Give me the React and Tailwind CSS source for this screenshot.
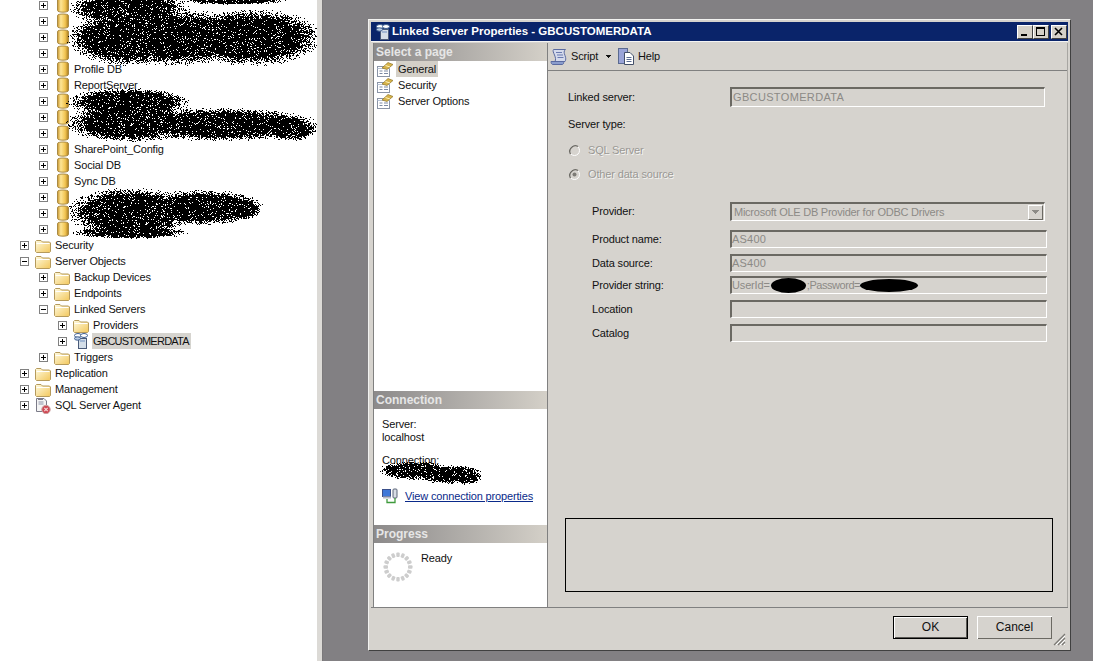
import { useId } from 'react'

const font = "font-['Liberation_Sans',Arial,sans-serif] text-[11px] leading-[13px] tracking-[-0.15px]"

// scribbled-out areas, speckled pixel by pixel
const speckle = (blobs, w, h) => {
  let seed = 12345
  const rand = () => {
    seed = (seed * 1103515245 + 12345) & 0x7fffffff
    return seed / 0x7fffffff
  }
  let d = ''
  for (let y = 0; y < h; y++) {
    for (let x = 0; x < w; x++) {
      let v = 9
      for (const [cx, cy, rx, ry] of blobs) {
        v = Math.min(v, Math.hypot((x - cx) / rx, (y - cy) / ry))
      }
      const p = v < 0.72 ? 0.9 : v < 1.06 ? (0.9 * (1.06 - v)) / 0.34 : 0
      if (rand() < p) d += `M${x} ${y}h1v1h-1z`
    }
  }
  return d
}

const treeBlobs = [
  [235, 0, 50, 4],
  [128, 8, 58, 16],
  [125, 38, 56, 26],
  [170, 37, 90, 27],
  [252, 37, 68, 27],
  [128, 102, 60, 14],
  [130, 122, 62, 19],
  [220, 124, 95, 16],
  [290, 128, 26, 12],
  [130, 212, 60, 24],
  [200, 207, 60, 17],
  [238, 208, 24, 11],
  [130, 232, 56, 6],
]

const connectionBlobs = [
  [35, 9, 34, 9],
  [70, 13, 34, 9],
  [88, 15, 14, 8],
]

const Scribble = ({ blobs, w, h, className }) => (
  <svg width={w} height={h} className={className} shapeRendering="crispEdges">
    <path d={speckle(blobs, w, h)} fill="#000" />
  </svg>
)

const Expander = ({ open }) => (
  <span className="flex h-[9px] w-[9px] shrink-0 items-center justify-center border border-[#808080] bg-white">
    <svg width="7" height="7" shapeRendering="crispEdges">
      <path d="M1 3h5v1H1z" fill="#000" />
      {!open && <path d="M3 1h1v5H3z" fill="#000" />}
    </svg>
  </span>
)

const DbIcon = () => {
  const id = useId()
  return (
    <svg width="12" height="16" className="ml-[3px]">
      <defs>
        <linearGradient id={id}>
          <stop offset="0" stopColor="#c9952c" />
          <stop offset="0.3" stopColor="#fde596" />
          <stop offset="0.7" stopColor="#f2c552" />
          <stop offset="1" stopColor="#a87a1e" />
        </linearGradient>
      </defs>
      <path d="M0.5 2.5C0.5 0.5 11.5 0.5 11.5 2.5V13.5C11.5 15.7 0.5 15.7 0.5 13.5Z" fill={`url(#${id})`} stroke="#a98a44" />
    </svg>
  )
}

const FolderIcon = () => {
  const id = useId()
  return (
    <svg width="16" height="14" className="mt-[2px]">
      <defs>
        <linearGradient id={id} x2="1" y2="1">
          <stop offset="0" stopColor="#fffbe0" />
          <stop offset="1" stopColor="#f2c75c" />
        </linearGradient>
      </defs>
      <path d="M0.5 12.5V2.5L1.5 1.5H6L7.5 3H14.5L15.5 4V12.5L14.5 13.5H1.5Z" fill={`url(#${id})`} stroke="#b59a5c" />
      <path d="M1.5 4.5H14.5" stroke="#fff" />
    </svg>
  )
}

const LinkedIcon = () => (
  <svg width="14" height="16" viewBox="0 0 14 16" className="ml-[1px]">
    <rect x="4.5" y="5.5" width="8" height="10" fill="#d4dee8" stroke="#4a5a78" />
    <path d="M6 8h5" stroke="#6f8fc0" />
    <ellipse cx="4" cy="2.5" rx="3.5" ry="2" fill="#fff" stroke="#3f5f90" />
    <ellipse cx="10" cy="2.5" rx="3.5" ry="2" fill="#fff" stroke="#3f5f90" />
    <ellipse cx="3.5" cy="5.5" rx="3" ry="1.7" fill="#b9cbe4" stroke="#3f5f90" />
  </svg>
)

const AgentIcon = () => (
  <svg width="16" height="17" viewBox="0 0 16 17">
    <path d="M1.5 1.5H9L11.5 4V14.5H1.5Z" fill="#f4f4f4" stroke="#7b7b88" />
    <path d="M3.5 5h5M3.5 7h5" stroke="#8c93a8" />
    <rect x="3" y="1" width="5" height="2" fill="#7b7b88" />
    <circle cx="11" cy="12.5" r="4.2" fill="#cf4a55" stroke="#c9a0a0" />
    <path d="M9.3 10.8l3.4 3.4M12.7 10.8l-3.4 3.4" stroke="#f6dcdc" strokeWidth="1.1" />
  </svg>
)

const TreeRow = ({ level, icon, label, open, selected }) => (
  <div
    className={`flex h-4 items-center ${
      level === 1 ? 'pl-5' : level === 2 ? 'pl-[39px]' : 'pl-[58px]'
    }`}
  >
    <Expander open={open} />
    <span className="ml-[6px] flex h-4 w-4 shrink-0 items-start">
      {icon === 'db' && <DbIcon />}
      {icon === 'folder' && <FolderIcon />}
      {icon === 'linked' && <LinkedIcon />}
      {icon === 'agent' && <AgentIcon />}
    </span>
    <span
      className={`ml-[3px] whitespace-nowrap pl-[1px] pr-[2px] leading-4 text-[#111] ${
        selected ? 'bg-[#d6d4cf] tracking-[-0.75px]' : ''
      }`}
    >
      {label}
    </span>
  </div>
)

const dbRows = ['', '', '', '', 'Profile DB', 'ReportServer', '', '', '', 'SharePoint_Config', 'Social DB', 'Sync DB', '', '', '']

const Tree = () => (
  <div className={`relative w-[317px] shrink-0 overflow-hidden bg-white ${font}`}>
    <div className="-mt-[3px]">
      {dbRows.map((label, i) => (
        <TreeRow key={i} level={2} icon="db" label={label} />
      ))}
      <TreeRow level={1} icon="folder" label="Security" />
      <TreeRow level={1} icon="folder" label="Server Objects" open />
      <TreeRow level={2} icon="folder" label="Backup Devices" />
      <TreeRow level={2} icon="folder" label="Endpoints" />
      <TreeRow level={2} icon="folder" label="Linked Servers" open />
      <TreeRow level={3} icon="folder" label="Providers" />
      <TreeRow level={3} icon="linked" label="GBCUSTOMERDATA" selected />
      <TreeRow level={2} icon="folder" label="Triggers" />
      <TreeRow level={1} icon="folder" label="Replication" />
      <TreeRow level={1} icon="folder" label="Management" />
      <TreeRow level={1} icon="agent" label="SQL Server Agent" />
    </div>
    <Scribble blobs={treeBlobs} w={317} h={240} className="absolute left-0 top-0" />
  </div>
)

const PaneHeader = ({ children }) => (
  <div className="flex h-[18px] shrink-0 items-center bg-gradient-to-r from-[#8c8a8a] to-[#d4d0c8] pl-[2px] text-[12px] font-bold tracking-normal text-[#e6e6e6]">
    {children}
  </div>
)

const PageIcon = () => (
  <svg width="17" height="16" viewBox="0 0 17 16">
    <rect x="0.5" y="5.5" width="12" height="10" fill="#fff" stroke="#8a94a6" />
    <path d="M0.5 7.5h12" stroke="#b7c3d6" />
    <path d="M2.5 10h3M2.5 12.5h3M7 10h4M7 12.5h4" stroke="#7c8aa3" />
    <path d="M5 7L11 1.5L16 3.5L10 8.5Z" fill="#d8b44a" stroke="#8e7428" strokeWidth="0.7" />
    <path d="M8.5 4.5L13 6" stroke="#fff3b8" />
  </svg>
)

const PageRow = ({ label, selected }) => (
  <div className="flex h-4 items-center pl-[3px]">
    <PageIcon />
    <span className={`ml-[2px] px-[2px] leading-4 text-[#111] ${selected ? 'bg-[#d4d0c8]' : ''}`}>{label}</span>
  </div>
)

const NetIcon = () => (
  <svg width="17" height="16" viewBox="0 0 17 16">
    <rect x="0.5" y="1.5" width="8" height="7" fill="#3f78d8" stroke="#3a4f8a" />
    <rect x="1" y="8.5" width="8" height="2" fill="#b8bcc8" />
    <rect x="11" y="1" width="4" height="9" rx="1" fill="#d8dce4" stroke="#5a6478" />
    <path d="M5 11v3.5h8V10" fill="none" stroke="#3f9a3c" strokeWidth="1.3" />
  </svg>
)

const Spinner = () => (
  <svg width="30" height="30" viewBox="-15 -15 30 30">
    {Array.from({ length: 16 }).map((_, i) => (
      <rect key={i} x="-1.7" y="-14.5" width="3.4" height="4.5" rx="1" fill="#cdcdcd" transform={`rotate(${i * 22.5})`} />
    ))}
  </svg>
)

const LeftPane = () => (
  <div className="ml-[2px] flex w-[175px] shrink-0 flex-col border-l border-r border-[#808080] bg-white">
    <PaneHeader>Select a page</PaneHeader>
    <div className="flex-1">
      <PageRow label="General" selected />
      <PageRow label="Security" />
      <PageRow label="Server Options" />
    </div>
    <PaneHeader>Connection</PaneHeader>
    <div className="relative h-[116px] pl-2 pt-[9px] text-[#111]">
      <div>Server:</div>
      <div>localhost</div>
      <div className="mt-[10px]">Connection:</div>
      <Scribble blobs={connectionBlobs} w={110} h={26} className="absolute left-[5px] top-[52px]" />
      <div className="mt-[21px] flex h-4 items-center">
        <NetIcon />
        <a className="ml-[6px] text-[#0a2a8a] underline">View connection properties</a>
      </div>
    </div>
    <PaneHeader>Progress</PaneHeader>
    <div className="flex h-[64px] pl-[9px] pt-[9px] text-[#111]">
      <Spinner />
      <span className="ml-2">Ready</span>
    </div>
  </div>
)

const ScriptIcon = () => (
  <svg width="18" height="18" viewBox="0 0 18 18">
    <path d="M3.5 1.5H15.5C13.5 3 14 5 15 7.5C16 10 16 12 15 13.5H5C6 11.5 5.5 9.5 4.5 7C3.5 4.5 2.5 3 3.5 1.5Z" fill="#d4daec" stroke="#5a6aa0" />
    <path d="M1 13.5H13.5C14 15 13.5 16 12.5 16.5H2.5C1.5 16 1 15 1 13.5Z" fill="#8a9ccc" stroke="#5a6aa0" />
    <path d="M6 4.5h6M7 7h6M7.5 9.5h6" stroke="#6a7ab0" />
  </svg>
)

const HelpIcon = () => (
  <svg width="17" height="17" viewBox="0 0 17 17">
    <rect x="0.5" y="0.5" width="9" height="15" fill="#9aa4d8" stroke="#5a6a90" />
    <path d="M6.5 4.5H12L15.5 8V16.5H6.5Z" fill="#fff" stroke="#44506a" />
    <path d="M8.5 9.5h5M8.5 11.5h5M8.5 13.5h5" stroke="#5a6a90" />
  </svg>
)

const Toolbar = () => (
  <div className="flex h-[28px] shrink-0 items-center border-b border-[#808080] pl-[2px] text-[#111]">
    <ScriptIcon />
    <span className="ml-[3px] w-[29px]">Script</span>
    <svg width="5" height="3" className="ml-[6px]" shapeRendering="crispEdges">
      <path d="M0 0h5v1h-1v1h-1v1h-1v-1h-1v-1h-1z" fill="#111" />
    </svg>
    <span className="ml-[7px] flex">
      <HelpIcon />
    </span>
    <span className="ml-[3px]">Help</span>
  </div>
)

const fieldBox = 'border-t-2 border-l-2 border-b border-r border-t-[#6b6963] border-l-[#6b6963] border-b-white border-r-white'

const Field = ({ children, className = 'h-[18px] w-[317px]' }) => (
  <div className={`flex items-center overflow-hidden whitespace-nowrap text-[#8c8a86] ${fieldBox} ${className}`}>
    {children}
  </div>
)

const FormRow = ({ label, mt, children }) => (
  <div className={`flex items-center pl-[44px] ${mt}`}>
    <span className="w-[138px] shrink-0 text-[#111]">{label}</span>
    {children}
  </div>
)

const Radio = ({ checked }) => (
  <svg width="13" height="13" viewBox="0 0 13 13">
    <circle cx="6.5" cy="6.5" r="5" fill="#d6d3ce" stroke="#fff" />
    <path d="M2.5 10A5.5 5.5 0 0 1 10 2.5" fill="none" stroke="#6b6963" strokeWidth="1.4" />
    {checked && <circle cx="6.5" cy="6.5" r="2" fill="#7d7b76" />}
  </svg>
)

const RadioRow = ({ label, checked, mt }) => (
  <div className={`flex h-4 items-center pl-[20px] ${mt}`}>
    <Radio checked={checked} />
    <span className="ml-[7px] text-[#9a9894] [text-shadow:1px_1px_0_#f4f4f2]">{label}</span>
  </div>
)

const RightPane = () => (
  <div className="flex min-w-0 flex-1 flex-col border-r border-[#a8a6a2]">
    <Toolbar />
    <div className="flex flex-1 flex-col">
      <div className="mt-4 flex items-center pl-5">
        <span className="w-[162px] shrink-0 text-[#111]">Linked server:</span>
        <Field className="h-5 w-[315px]">
          <span className="pl-px tracking-[0.35px]">GBCUSTOMERDATA</span>
        </Field>
      </div>
      <div className="mt-[9px] flex h-4 items-center pl-5 text-[#111]">Server type:</div>
      <RadioRow label="SQL Server" mt="mt-[10px]" />
      <RadioRow label="Other data source" checked mt="mt-2" />
      <FormRow label="Provider:" mt="mt-5">
        <Field className="h-[19px] w-[315px] justify-between">
          <span className="pl-[2px] tracking-[-0.25px]">Microsoft OLE DB Provider for ODBC Drivers</span>
          <span className="mr-px flex h-[15px] w-[15px] items-center justify-center border border-t-white border-l-white border-b-[#6b6963] border-r-[#6b6963]">
            <svg width="7" height="4" shapeRendering="crispEdges">
              <path d="M0 0h7v1h-1v1h-1v1h-1v1h-1v-1h-1v-1h-1v-1h-1z" fill="#8c8a86" />
            </svg>
          </span>
        </Field>
      </FormRow>
      <FormRow label="Product name:" mt="mt-[9px]">
        <Field>
          <span className="tracking-[0.2px]">AS400</span>
        </Field>
      </FormRow>
      <FormRow label="Data source:" mt="mt-[6px]">
        <Field>
          <span className="tracking-[0.2px]">AS400</span>
        </Field>
      </FormRow>
      <FormRow label="Provider string:" mt="mt-1">
        <Field>
          UserId=
          <span className="mx-px inline-block h-[15px] w-[35px] rounded-[50%] bg-black" />
          <span className="tracking-[-0.45px]">;Password=</span>
          <span className="inline-block h-[13px] w-[58px] rounded-[50%] bg-black" />
        </Field>
      </FormRow>
      <FormRow label="Location" mt="mt-[6px]">
        <Field />
      </FormRow>
      <FormRow label="Catalog" mt="mt-[6px]">
        <Field />
      </FormRow>
      <div className="mb-[15px] ml-[17px] mt-auto h-[74px] w-[488px] border border-black" />
    </div>
  </div>
)

const TitleButton = ({ children, className = '' }) => (
  <span className={`flex h-[14px] w-[16px] items-center justify-center border border-t-white border-l-white border-b-[#404040] border-r-[#404040] bg-[#d4d0c8] ${className}`}>
    <svg width="12" height="10" shapeRendering="crispEdges">
      {children}
    </svg>
  </span>
)

const TitleBar = () => (
  <div className="flex h-[20px] shrink-0 items-center border-b border-[#f4f4f4] bg-[#0a246a] pl-[4px] pr-[1px]">
    <span className="flex">
      <LinkedIcon />
    </span>
    <span className="ml-[2px] text-[11.5px] font-bold tracking-normal text-white">Linked Server Properties - GBCUSTOMERDATA</span>
    <TitleButton className="ml-auto">
      <path d="M2 7h6v2H2z" fill="#000" />
    </TitleButton>
    <TitleButton>
      <path d="M1 0h9v9H1zM2 2v6h7V2z" fill="#000" fillRule="evenodd" />
    </TitleButton>
    <TitleButton className="ml-[2px]">
      <path d="M2 1l7 7M9 1l-7 7" stroke="#000" strokeWidth="1.6" shapeRendering="auto" />
    </TitleButton>
  </div>
)

const Grip = () => (
  <svg width="13" height="13" viewBox="0 0 13 13" className="absolute bottom-[2px] right-[2px]">
    <path d="M12 1L1 12M12 5L5 12M12 9L9 12" stroke="#7a7874" strokeWidth="1.2" />
    <path d="M12 3L3 12M12 7L7 12M12 11L11 12" stroke="#fff" strokeWidth="1" />
  </svg>
)

const Dialog = () => (
  <div className="flex h-[632px] w-[703px] flex-col border border-t-[#f2f2f0] border-l-[#f2f2f0] border-b-[#404040] border-r-[#404040] bg-[#d6d3ce] p-[2px]">
    <TitleBar />
    <div className="mt-px flex h-[565px] shrink-0 border-b border-[#808080]">
      <LeftPane />
      <RightPane />
    </div>
    <div className="relative flex flex-1 items-start justify-end gap-[9px] pr-4 pt-2 text-[12px] tracking-normal text-[#111]">
      <button className="flex h-[23px] w-[75px] items-center justify-center border border-black shadow-[inset_1px_1px_0_#fff,inset_-1px_-1px_0_#5a5854]">
        OK
      </button>
      <button className="flex h-[23px] w-[75px] items-center justify-center shadow-[inset_1px_1px_0_#fff,inset_-1px_-1px_0_#6b6963]">
        Cancel
      </button>
      <Grip />
    </div>
  </div>
)

export default function App() {
  return (
    <div className={`flex h-[661px] w-[1093px] overflow-hidden bg-white ${font}`}>
      <Tree />
      <div className="w-[5px] shrink-0 bg-[#dcdad6]" />
      <div className="flex-1 border-l border-[#7a787a] bg-[#828083] pl-[45px] pt-[19px]">
        <Dialog />
      </div>
    </div>
  )
}
